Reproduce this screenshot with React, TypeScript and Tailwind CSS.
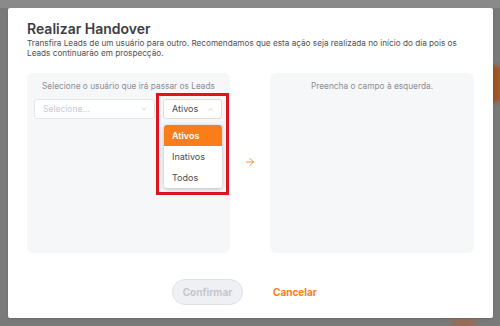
import { ArrowRight, ChevronDown, ChevronUp } from "lucide-react"

export default function App() {
  return (
    <div
      className="relative w-[500px] h-[326px] overflow-hidden bg-[#7a7a7a] p-2"
      style={{ fontFamily: "Inter, 'Noto Sans', sans-serif" }}
    >
      {/* blurred page behind the overlay */}
      <div className="absolute right-0 top-[66px] w-[10px] h-[36px] bg-[#a2541a] blur-[2px]" />
      <div className="absolute left-[452px] top-[318px] w-[24px] h-[12px] rounded-full bg-[#9a6a50] blur-[3px]" />
      <div className="absolute left-0 top-0 w-full h-[8px] bg-[#8a8a8a]" />

      <div className="relative flex flex-col w-[485px] h-[310px] bg-white rounded-[2px] px-[19px] pt-[12px] shadow">
        <h2 className="text-[14px] leading-[18px] font-semibold text-[#3d3d42]">Realizar Handover</h2>
        <p className="text-[8.2px] leading-[10px] text-[#4f4f55] whitespace-nowrap">
          Transfira Leads de um usuário para outro. Recomendamos que esta ação seja realizada no início do dia pois os
          <br />
          Leads continuarão em prospecção.
        </p>

        <div className="flex items-stretch mt-[15px] h-[180px]">
          {/* left panel */}
          <div className="relative w-[203px] bg-[#f6f7f9] rounded-[6px] px-[7px] pt-[7px]">
            <div className="text-center text-[8.3px] leading-[12px] text-[#8c8e94]">Selecione o usuário que irá passar os Leads</div>
            <div className="flex gap-[8px] mt-[7px]">
              <div className="flex items-center justify-between w-[121px] h-[20px] bg-white border border-[#e3e5e9] rounded-[3px] pl-[8px] pr-[6px]">
                <span className="text-[8.5px] text-[#c8cad0]">Selecione...</span>
                <ChevronDown size={8} className="text-[#c0c2c8]" />
              </div>
              <div className="flex items-center justify-between w-[59px] h-[20px] bg-white border border-[#f3d9c4] rounded-[3px] pl-[8px] pr-[7px]">
                <span className="text-[9px] text-[#4a4a50]">Ativos</span>
                <ChevronUp size={7} className="text-[#b0b2b8]" />
              </div>
            </div>

            {/* open dropdown */}
            <div className="absolute left-[137px] top-[52px] w-[58px] bg-white rounded-[3px] shadow-[0_1px_4px_rgba(0,0,0,0.25)] overflow-hidden">
              <div className="h-[21px] flex items-center pl-[8px] bg-[#fb7d1a] text-white text-[9px] font-semibold">Ativos</div>
              <div className="h-[21px] flex items-center pl-[8px] text-[#4a4a50] text-[9px]">Inativos</div>
              <div className="h-[21px] flex items-center pl-[8px] text-[#4a4a50] text-[9px]">Todos</div>
            </div>

            {/* red highlight */}
            <div className="absolute left-[129px] top-[20px] w-[73px] h-[102px] border-[3px] border-[#e0141e]" />
          </div>

          <div className="flex-1 flex items-center justify-center pb-[2px]">
            <ArrowRight size={12} strokeWidth={1.8} className="text-[#f58220]" />
          </div>

          {/* right panel */}
          <div className="w-[204px] bg-[#f6f7f9] rounded-[6px] pt-[7px]">
            <div className="text-center text-[8.3px] leading-[12px] text-[#8c8e94]">Preencha o campo à esquerda.</div>
          </div>
        </div>

        <div className="flex items-center mt-[26px] pl-[145px] gap-[30px]">
          <button className="w-[71px] h-[26px] rounded-full bg-[#eff0f4] border border-[#dfe1e6] text-[10px] font-bold text-[#c4c6cc]">
            Confirmar
          </button>
          <button className="text-[10px] font-bold text-[#fb7d1a]">Cancelar</button>
        </div>
      </div>
    </div>
  )
}
